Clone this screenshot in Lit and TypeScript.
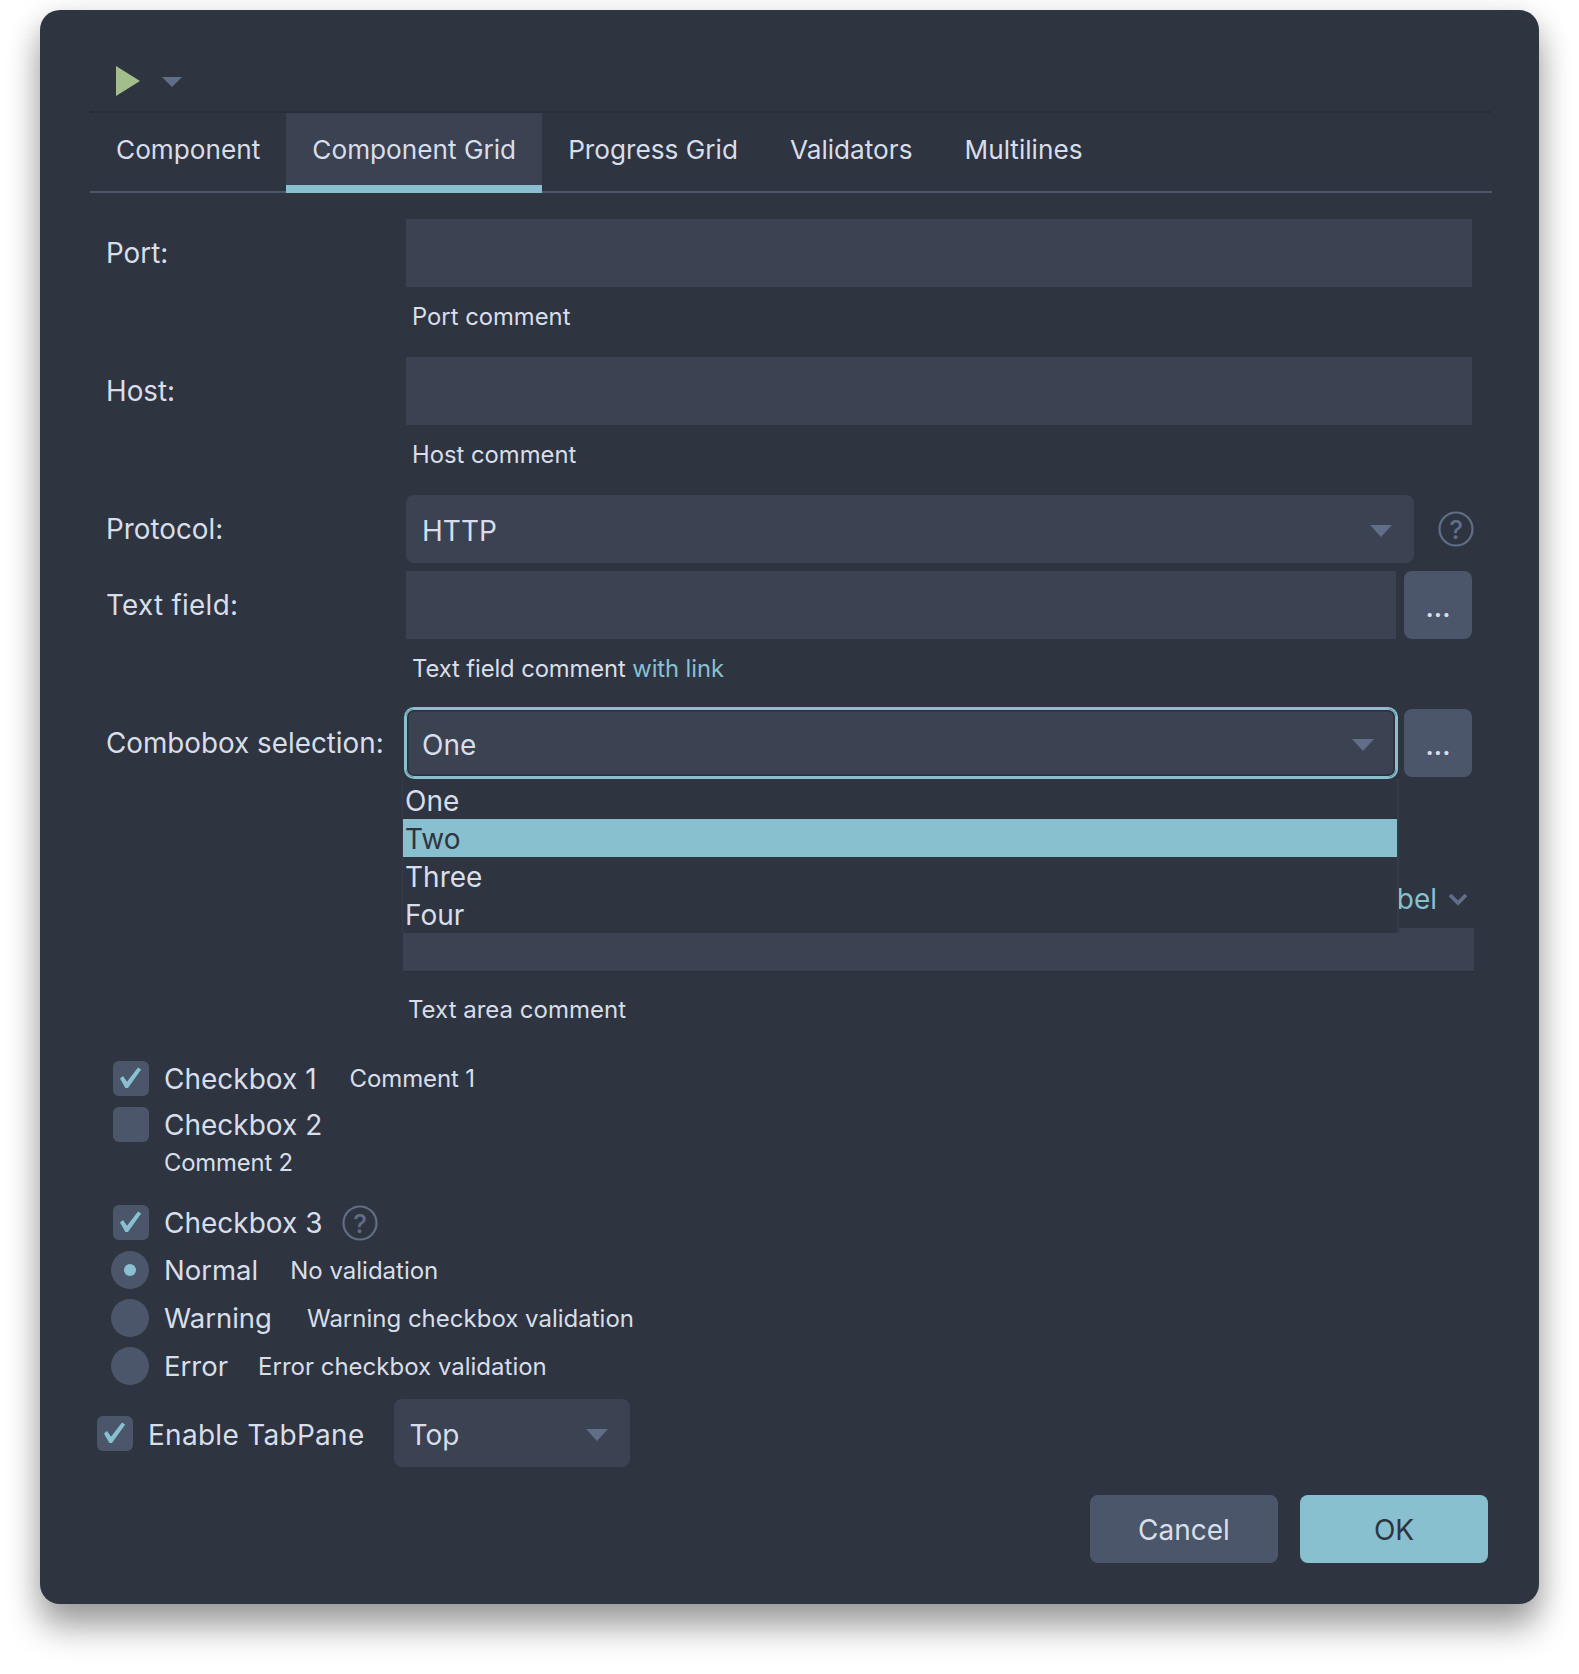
import { LitElement, html, css, svg } from "lit";
import { customElement } from "lit/decorators.js";

const check = svg`<svg class="mark" viewBox="0 0 36 35" width="36" height="35"><path d="M7 17.5l3-2.4 4 5.6L25 6.5l3.2 1.9L15 27h-2.6z" fill="#88c0d0"/></svg>`;

@customElement("app-root")
export class AppRoot extends LitElement {
  static styles = css`
    :host { display: block; width: 1579px; height: 1674px; padding: 10px 40px 0; box-sizing: border-box; background: #fff;
      font-family: "Inter", "Liberation Sans", sans-serif; color: #d8dee9; font-size: 28px; }
    * { box-sizing: border-box; }
    .dialog { position: relative; width: 1499px; height: 1594px; background: #2e3440; border-radius: 20px;
      box-shadow: 0 24px 34px rgba(0,0,0,.33), 0 6px 30px rgba(0,0,0,.14); padding-left: 50px; }
    .toolbar { height: 103px; padding: 56px 0 0 26px; display: flex; align-items: flex-start; gap: 22px; border-bottom: 2px solid #2a2e38; width: 1402px; }
    .run { display: block; }
    .drop { display: block; margin-top: 11px; }
    .tabs { display: flex; width: 1402px; height: 80px; border-bottom: 2px solid #4c566a; font-size: 26.2px; }
    .tab { height: 80px; padding: 0 26px; line-height: 74px; white-space: nowrap; }
    .tab.on { background: #3b4252; border-bottom: 8px solid #88c0d0; }
    .form { margin: 26px 0 0 17px; width: 1365px; display: grid; grid-template-columns: 299px 1fr; align-items: center; }
    .label { height: 68px; line-height: 69px; white-space: nowrap; font-size: 27.8px; margin-left: -1px; }
    .label.wide { letter-spacing: .3px; }
    .field { height: 68px; background: #3b4252; flex: 1; }
    .hint { grid-column: 2; height: 70px; line-height: 60px; font-size: 23.8px; padding-left: 6px; }
    .hint.tight { letter-spacing: -.1px; }
    .hint a { color: #88c0d0; }
    .line { display: flex; gap: 8px; align-items: center; }
    .combo { height: 68px; flex: 1; background: #3b4252; border-radius: 8px; display: flex; align-items: center; justify-content: space-between;
      padding: 4px 22px 0 16px; font-size: 28px; }
    .combo svg { display: block; }
    .combo.focus { box-shadow: 0 0 0 2px #88c0d0, inset 0 0 0 1px #88c0d0, inset 0 0 0 2.5px #2b2f3a; }
    .btn { width: 68px; height: 68px; background: #4c566a; border-radius: 8px; text-align: center; line-height: 74px; font-weight: 600; font-size: 26px; }
    .help { display: block; flex: none; margin: 0 -2px 0 16px; }
    .help text { font-family: "Inter", sans-serif; font-size: 26px; font-weight: 500; fill: #616e88; }
    .gap8 { grid-column: 1 / 3; height: 8px; }
    .labelrow { grid-column: 2; height: 58px; display: flex; justify-content: flex-end; align-items: center; gap: 11px; color: #88c0d0; font-size: 28px; padding-right: 4px; }
    .area { grid-column: 2; height: 44px; background: #3b4252; margin: 0 -2px 0 -3px; border-bottom: 1px solid #2b2e36; }
    .hint.t { height: 74px; line-height: 75px; padding-left: 2px; font-size: 24px; }
    .spacer { grid-column: 1 / 3; height: 93px; }
    .popup { position: absolute; left: 362px; top: 769px; width: 997px; background: #2e3440; border-style: solid; border-color: #353b49; border-width: 0 2px 0 1px; font-size: 28px; height: 154px; padding-top: 2px; }
    .popup div { height: 38px; line-height: 40px; padding-left: 2px; }
    .popup .sel { background: #88c0d0; color: #2e3440; }
    .checks { margin: 15px 0 0 23px; }
    .ck { display: flex; align-items: center; height: 35px; white-space: nowrap; font-size: 28px; }
    .box { width: 36px; height: 35px; background: #4c566a; border-radius: 6px; margin-right: 15px; flex: none; position: relative; }
    .mark { display: block; }
    .ck small { font-size: 24px; margin-left: 33px; letter-spacing: -.12px; }
    .rd { display: flex; align-items: center; height: 38px; margin: 10px 0 0 -2px; white-space: nowrap; font-size: 27.5px; }
    .radio { width: 38px; height: 38px; border-radius: 50%; background: #4c566a; margin-right: 15px; flex: none; display: flex; align-items: center; justify-content: center; }
    .radio i { width: 12px; height: 12px; border-radius: 50%; background: #88c0d0; }
    .rd small { font-size: 24px; margin-left: 32px; }
    .rd small.more { margin-left: 35px; }
    .rd small.less { margin-left: 30px; }
    .c2 { height: 28px; line-height: 28px; font-size: 23.8px; margin: 7px 0 0 51px; letter-spacing: -.15px; }
    .ck .nudge { display: block; margin-left: 4px; }
    .first { margin-top: 0; }
    .second { margin-top: 11px; }
    .third { margin-top: 28px; }
    .rd.normal { margin-top: 11px; }
    .bottom { display: flex; align-items: center; margin: 14px 0 0 7px; height: 68px; font-size: 28px; }
    .en { letter-spacing: .28px; padding-top: 3px; }
    .top { flex: none; width: 236px; padding: 3px 22px 0 16px; margin-left: 29px; }
    .actions { display: flex; justify-content: flex-end; gap: 22px; width: 1398px; margin-top: 28px; font-size: 28px; }
    .act { width: 188px; height: 68px; border-radius: 8px; background: #4c566a; text-align: center; line-height: 70px; }
    .act.ok { background: #88c0d0; color: #2e3440; }
  `;

  private arrow() {
    return svg`<svg width="22" height="12" viewBox="0 0 22 12"><path d="M0 0h22L11 12z" fill="#616e88"/></svg>`;
  }
  private help() {
    return svg`<svg class="help" width="36" height="36" viewBox="0 0 36 36"><circle cx="18" cy="18" r="16.5" fill="none" stroke="#616e88" stroke-width="2.2"/><text x="18" y="27.5" text-anchor="middle">?</text></svg>`;
  }

  render() {
    return html`<div class="dialog">
      <div class="toolbar">
        <svg class="run" width="24" height="30" viewBox="0 0 24 30"><path d="M0 0l24 15L0 30z" fill="#a3be8c"/></svg>
        <svg class="drop" width="20" height="10" viewBox="0 0 20 10"><path d="M0 0h20L10 10z" fill="#616e88"/></svg>
      </div>
      <div class="tabs">
        <div class="tab">Component</div><div class="tab on">Component Grid</div><div class="tab">Progress Grid</div><div class="tab">Validators</div><div class="tab">Multilines</div>
      </div>
      <div class="form">
        <div class="label">Port:</div><div class="field"></div>
        <div class="hint">Port comment</div>
        <div class="label">Host:</div><div class="field"></div>
        <div class="hint">Host comment</div>
        <div class="label">Protocol:</div><div class="line"><div class="combo">HTTP ${this.arrow()}</div>${this.help()}</div>
        <div class="gap8"></div>
        <div class="label wide">Text field:</div><div class="line"><div class="field"></div><div class="btn">...</div></div>
        <div class="hint tight">Text field comment <a>with link</a></div>
        <div class="label">Combobox selection:</div><div class="line"><div class="combo focus">One ${this.arrow()}</div><div class="btn">...</div></div>
        <div class="spacer"></div>
        <div class="labelrow">Label <svg width="20" height="14" viewBox="0 0 20 14"><path d="M2 3l8 8 8-8" fill="none" stroke="#616e88" stroke-width="3.8"/></svg></div>
        <div class="area"></div>
        <div class="hint t">Text area comment</div>
      </div>
      <div class="checks">
        <div class="ck first"><span class="box">${check}</span>Checkbox 1<small>Comment 1</small></div>
        <div class="ck second"><span class="box"></span>Checkbox 2</div>
        <div class="c2">Comment 2</div>
        <div class="ck third"><span class="box">${check}</span>Checkbox 3 <span class="nudge">${this.help()}</span></div>
        <div class="rd normal"><span class="radio"><i></i></span>Normal<small>No validation</small></div>
        <div class="rd"><span class="radio"></span>Warning<small class="more">Warning checkbox validation</small></div>
        <div class="rd"><span class="radio"></span>Error<small class="less">Error checkbox validation</small></div>
      </div>
      <div class="bottom"><span class="box">${check}</span><span class="en">Enable TabPane</span><div class="combo top">Top ${this.arrow()}</div></div>
      <div class="actions"><div class="act">Cancel</div><div class="act ok">OK</div></div>
      <div class="popup"><div>One</div><div class="sel">Two</div><div>Three</div><div>Four</div></div>
    </div>`;
  }
}
